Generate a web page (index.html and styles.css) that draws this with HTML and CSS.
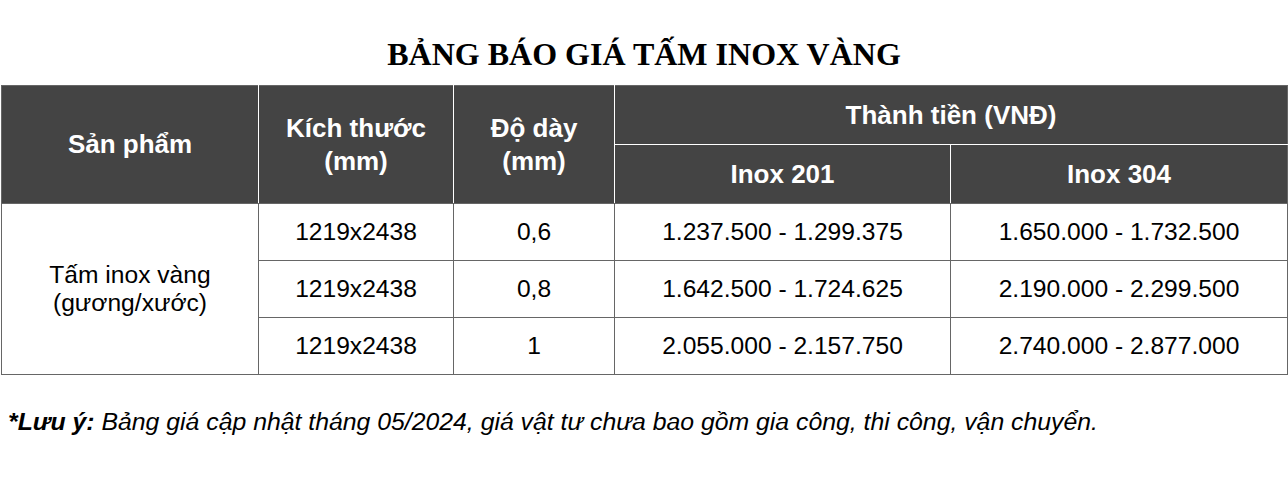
FILE: index.html
```html
<!DOCTYPE html>
<html lang="vi">
<head>
<meta charset="utf-8">
<title>Bảng báo giá tấm inox vàng</title>
<link rel="stylesheet" href="styles.css">
</head>
<body>
<h1 class="title">BẢNG BÁO GIÁ TẤM INOX VÀNG</h1>
<table class="price">
  <colgroup>
    <col class="c1"><col class="c2"><col class="c3"><col class="c4"><col class="c5">
  </colgroup>
  <thead>
    <tr class="hr1">
      <th rowspan="2">Sản phẩm</th>
      <th rowspan="2">Kích thước<br>(mm)</th>
      <th rowspan="2">Độ dày<br>(mm)</th>
      <th colspan="2">Thành tiền (VNĐ)</th>
    </tr>
    <tr class="hr2">
      <th>Inox 201</th>
      <th>Inox 304</th>
    </tr>
  </thead>
  <tbody>
    <tr>
      <td rowspan="3" class="prod">Tấm inox vàng<br>(gương/xước)</td>
      <td>1219x2438</td>
      <td>0,6</td>
      <td>1.237.500 - 1.299.375</td>
      <td>1.650.000 - 1.732.500</td>
    </tr>
    <tr>
      <td>1219x2438</td>
      <td>0,8</td>
      <td>1.642.500 - 1.724.625</td>
      <td>2.190.000 - 2.299.500</td>
    </tr>
    <tr>
      <td>1219x2438</td>
      <td>1</td>
      <td>2.055.000 - 2.157.750</td>
      <td>2.740.000 - 2.877.000</td>
    </tr>
  </tbody>
</table>
<p class="note"><b>*Lưu ý:</b> Bảng giá cập nhật tháng 05/2024, giá vật tư chưa bao gồm gia công, thi công, vận chuyển.</p>
</body>
</html>
```
FILE: styles.css
```css
html, body {
  margin: 0;
  padding: 0;
  background: #ffffff;
}
body {
  font-family: "Liberation Sans", Arial, sans-serif;
  color: #000000;
}
.title {
  margin: 0 0 13px 0;
  padding-top: 36px;
  font-family: "Liberation Serif", "Times New Roman", serif;
  font-weight: bold;
  font-size: 32px;
  line-height: 36px;
  text-align: center;
  color: #000000;
}
.price {
  margin-left: 1px;
  width: 1286px;
  border-collapse: collapse;
  table-layout: fixed;
  border: 1px solid #666666;
}
.c1 { width: 257px; }
.c2 { width: 195px; }
.c3 { width: 161px; }
.c4 { width: 336px; }
.c5 { width: 337px; }
.price th {
  background: #444444;
  color: #ffffff;
  font-weight: bold;
  font-size: 26px;
  line-height: 33px;
  padding: 0;
  border: 1px solid #ffffff;
  text-align: center;
  vertical-align: middle;
}
.price thead tr:first-child th {
  border-top-color: #666666;
}
.price thead th:first-child {
  border-left-color: #666666;
}
.price thead th:last-child,
.price .hr1 th[colspan] {
  border-right-color: #666666;
}
.price .hr2 th {
  border-bottom-color: #666666;
}
.price .hr1 th[rowspan] {
  border-bottom-color: #666666;
}
.hr1 { height: 59px; }
.hr2 { height: 59px; }
.price tbody tr { height: 57px; }
.price td {
  border: 1px solid #666666;
  padding: 0;
  font-size: 24.6px;
  line-height: 28px;
  text-align: center;
  vertical-align: middle;
}
.note {
  margin: 32px 0 0 8px;
  font-size: 24.8px;
  line-height: 30px;
  font-style: italic;
}
.note b {
  font-weight: bold;
}
```
